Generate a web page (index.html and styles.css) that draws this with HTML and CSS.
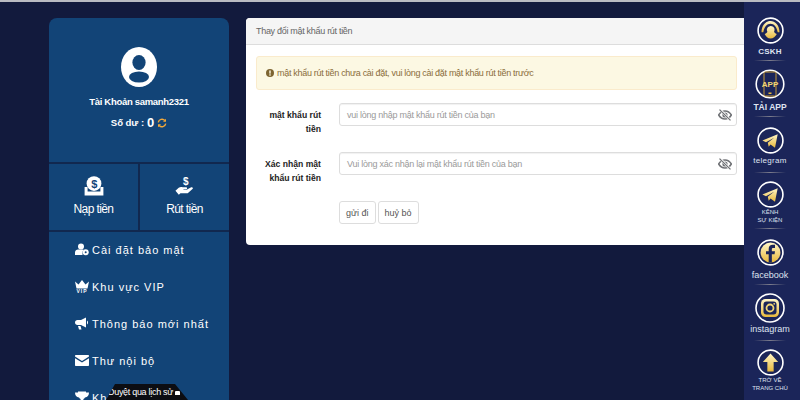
FILE: index.html
```html
<!DOCTYPE html>
<html lang="vi">
<head>
<meta charset="utf-8">
<title>Thay đổi mật khẩu rút tiền</title>
<link rel="stylesheet" href="styles.css">
</head>
<body>
<div class="page">
  <aside class="side">
    <section class="user">
      <svg class="avatar" viewBox="0 0 36 40" preserveAspectRatio="none"><ellipse cx="18" cy="20" rx="18" ry="20" fill="#fff"/><ellipse cx="18" cy="15.500" rx="6.600" ry="7.500" fill="#124477"/><ellipse cx="18" cy="30" rx="10" ry="5.500" fill="#124477"/></svg>
      <div class="uname">Tài Khoản samanh2321</div>
      <div class="balance">Số dư : <b>0</b>
        <svg class="refresh" viewBox="0 0 12 12"><path d="M1.500 5.200A4.600 4.600 0 0 1 9.400 3M10.500 6.800A4.600 4.600 0 0 1 2.600 9" fill="none" stroke="#f2a83a" stroke-width="1.700"/><path d="M10.800 .8v3.600H7.200zM1.200 11.200V7.600h3.600z" fill="#f2a83a"/></svg>
      </div>
    </section>
    <section class="actions">
      <a class="action">
        <svg viewBox="0 0 20 20"><circle cx="10" cy="7.600" r="7.400" fill="#fff"/><text x="10" y="11.600" text-anchor="middle" class="dollar">$</text><path d="M.6 11h3v4.600h12.800V11h3v8.400H.6z" fill="#fff"/></svg>
        <span>Nạp tiền</span>
      </a>
      <a class="action">
        <svg viewBox="0 0 22 20"><text x="11.500" y="9" text-anchor="middle" class="dollar white">$</text><path d="M.5 15.200l3.600-3.400c1.600-1 3-1 4.400-.4h3.800c1.400 0 1.400 2.200 0 2.200H9.200l.2.6h3.400l5-2.800c1.600-.6 2.600 1 1.400 2L14 18H6l-1.800 1.500z" fill="#fff"/></svg>
        <span>Rút tiền</span>
      </a>
    </section>
    <nav class="menu">
      <a class="item"><svg viewBox="0 0 14 12"><circle cx="6" cy="3" r="3" fill="#fff"/><path d="M0 11.500V9c0-2 1.500-3 3-3h5.500L7.500 8.500v3z" fill="#fff"/><circle cx="10.700" cy="8.800" r="3" fill="#fff"/><circle cx="10.700" cy="8.800" r="1" fill="#124477"/></svg><span>Cài đặt bảo mật</span></a>
      <a class="item"><svg viewBox="0 0 14 13"><path d="M0 1.500l3.500 3L7 0l3.500 4.500L14 1.500 12.500 8.500h-11z" fill="#fff"/><text x="7" y="13" text-anchor="middle" class="vip">VIP</text></svg><span>Khu vực VIP</span></a>
      <a class="item"><svg viewBox="0 0 14 12"><path d="M11 0v10L6 7.500H2.500C1 7.500 0 6.500 0 5s1-2.500 2.500-2.500H6zM12 3c1.400.6 1.400 3.400 0 4zM3 8.500h2.500l1 3.500H4z" fill="#fff"/></svg><span>Thông báo mới nhất</span></a>
      <a class="item"><svg viewBox="0 0 14 11"><path d="M1 0h12c.6 0 1 .4 1 1v.6L7 6 0 1.600V1c0-.6.400-1 1-1zM0 3.200l7 4.400 7-4.400V10c0 .6-.400 1-1 1H1c-.6 0-1-.400-1-1z" fill="#fff"/></svg><span>Thư nội bộ</span></a>
      <a class="item"><svg viewBox="0 0 14 12"><path d="M3 0h8v1h3c0 3-1.500 4.500-4 5-.4.800-1 1.200-1.600 1.400V9H10v2H4V9h1.600V7.400C5 7.200 4.400 6.800 4 6 1.500 5.500 0 4 0 1h3z" fill="#fff"/></svg><span>Khuyến mãi</span></a>
    </nav>
    <div class="tip">Duyệt qua lịch sử <i class="tip-lock"></i></div>
  </aside>

  <main class="panel">
    <header class="panel-head">Thay đổi mật khẩu rút tiền</header>
    <div class="panel-body">
      <div class="alert"><svg viewBox="0 0 10 10"><circle cx="5" cy="5" r="5" fill="#7d6431"/><rect x="4.100" y="1.800" width="1.800" height="4" fill="#fcf8e3"/><rect x="4.100" y="6.600" width="1.800" height="1.700" fill="#fcf8e3"/></svg>mật khẩu rút tiền chưa cài đặt, vui lòng cài đặt mật khẩu rút tiền trước</div>
      <div class="row">
        <label class="lbl">mật khẩu rút tiền</label>
        <div class="input"><span>vui lòng nhập mật khẩu rút tiền của bạn</span>
          <svg class="eye" viewBox="0 0 14 12"><path d="M.6 6C2.200 3.400 4.400 2 7 2s4.800 1.400 6.400 4C11.800 8.600 9.600 10 7 10S2.200 8.600.6 6z" fill="none" stroke="#6f7175" stroke-width="1.500"/><circle cx="7" cy="6" r="2.600" fill="#6f7175"/><path d="M2 .6l10.500 10.800" stroke="#fff" stroke-width="2.400"/><path d="M1.500 .6L12.500 11.400" stroke="#6f7175" stroke-width="1.300"/></svg>
        </div>
      </div>
      <div class="row">
        <label class="lbl">Xác nhận mật khẩu rút tiền</label>
        <div class="input"><span>Vui lòng xác nhận lại mật khẩu rút tiền của bạn</span>
          <svg class="eye" viewBox="0 0 14 12"><path d="M.6 6C2.200 3.400 4.400 2 7 2s4.800 1.400 6.400 4C11.800 8.600 9.600 10 7 10S2.200 8.600.6 6z" fill="none" stroke="#6f7175" stroke-width="1.500"/><circle cx="7" cy="6" r="2.600" fill="#6f7175"/><path d="M2 .6l10.500 10.800" stroke="#fff" stroke-width="2.400"/><path d="M1.500 .6L12.500 11.400" stroke="#6f7175" stroke-width="1.300"/></svg>
        </div>
      </div>
      <div class="btns">
        <button class="btn">gửi đi</button>
        <button class="btn">huỷ bỏ</button>
      </div>
    </div>
  </main>

  <aside class="rail">
    <svg width="0" height="0" class="defs"><defs>
      <linearGradient id="gold" x1="0" y1="0" x2="0" y2="1"><stop offset="0" stop-color="#fff6c8"/><stop offset="1" stop-color="#e8b93c"/></linearGradient>
    </defs></svg>
    <a class="rl cskh"><svg viewBox="0 0 30 30"><circle cx="15" cy="15" r="13.800" fill="#1b2559" stroke="#fff" stroke-width="1.800"/><path d="M5 17C5 9 10 4.500 15 4.500S25 9 25 17h-2C22 11 19 7.500 15 7.500S8 11 7 17z" fill="url(#gold)"/><path d="M8.500 19c2-1 3-2 3-3-1-1-1-5 3.500-6 5 0 5 5 4 6 0 1 1 2 3 3-1.500 3-4 5-7 5s-5-2-6.500-5z" fill="url(#gold)"/></svg><span>CSKH</span></a>
    <a class="rl big app"><svg viewBox="0 0 30 30"><circle cx="15" cy="15" r="13.800" fill="#1b2559" stroke="#fff" stroke-width="1.600"/><rect x="9" y="3" width="12" height="24" rx="1.500" fill="none" stroke="#c79a35" stroke-width="1"/><rect x="13.500" y="23.500" width="3" height="1.500" fill="#e8b93c"/><text x="15" y="18" text-anchor="middle" class="appword">APP</text></svg><span>TẢI APP</span></a>
    <a class="rl tg"><svg viewBox="0 0 30 30"><circle cx="15" cy="15" r="13.800" fill="#1b2559" stroke="#fff" stroke-width="1.800"/><path d="M6 15L23 8l-3 15-5-3.500-2 2.500-1-4.500 7-5.500-9 5z" fill="url(#gold)"/></svg><span>telegram</span></a>
    <a class="rl sm"><svg viewBox="0 0 30 30"><circle cx="15" cy="15" r="13.800" fill="#1b2559" stroke="#fff" stroke-width="1.800"/><path d="M6 15L23 8l-3 15-5-3.500-2 2.500-1-4.500 7-5.500-9 5z" fill="url(#gold)"/></svg><span>KÊNH<br>SỰ KIỆN</span></a>
    <a class="rl"><svg viewBox="0 0 30 30"><circle cx="15" cy="15" r="13.800" fill="#1b2559" stroke="#fff" stroke-width="1.800"/><circle cx="15" cy="15" r="11" fill="url(#gold)"/><path d="M13 26v-9h-3v-3.500h3V11c0-3 1.800-4.500 4.500-4.500H20V10h-1.800c-1.200 0-1.700.5-1.700 1.500v2H20l-.5 3.500h-3v9z" fill="#1b2559"/></svg><span>facebook</span></a>
    <a class="rl big"><svg viewBox="0 0 30 30"><circle cx="15" cy="15" r="14" fill="#1b2559" stroke="#fff" stroke-width="1.600"/><rect x="6" y="6" width="18" height="18" rx="4.500" fill="url(#gold)"/><rect x="8.500" y="8.500" width="13" height="13" rx="3" fill="#1b2559"/><circle cx="15" cy="15" r="3.500" fill="none" stroke="#f3d775" stroke-width="1.800"/><circle cx="19.200" cy="10.800" r=".9" fill="#f3d775"/></svg><span>instagram</span></a>
    <a class="rl sm last"><svg viewBox="0 0 30 30"><circle cx="15" cy="15" r="13.800" fill="#1b2559" stroke="#fff" stroke-width="1.800"/><path d="M15 5l8.500 9.500h-5V25h-7V14.500h-5z" fill="url(#gold)"/></svg><span>TRỞ VỀ<br>TRANG CHỦ</span></a>
  </aside>
</div>
</body>
</html>
```
FILE: styles.css
```css
* { box-sizing: border-box; }
html, body { margin: 0; height: 100%; overflow: hidden; }
body {
  background: #121a3d;
  font-family: "Liberation Sans", Arial, sans-serif;
  border-top: 2px solid #b9bbc2;
}
.page { display: flex; align-items: flex-start; height: 398px; padding-left: 49px; }
.side {
  position: relative;
  flex: 0 0 180px;
  margin-top: 16px;
  height: 400px;
  background: #124477;
  border-radius: 8px 8px 0 0;
  color: #fff;
}
.user {
  height: 146px;
  padding-top: 29px;
  display: flex;
  flex-direction: column;
  align-items: center;
  border-bottom: 2px solid #11284f;
}
.avatar { width: 36px; height: 40px; }
.uname { margin-top: 8px; font-size: 9.500px; letter-spacing: -.3px; font-weight: 700; line-height: 14px; }
.balance { margin-top: 5px; font-size: 9.600px; font-weight: 700; line-height: 18px; display: flex; align-items: center; gap: 3px; letter-spacing: -.05px; }
.balance b { font-size: 13px; }
.refresh { width: 10px; height: 10px; }
.actions { display: flex; height: 68px; border-bottom: 2px solid #11284f; }
.action {
  flex: 1;
  display: flex;
  flex-direction: column;
  align-items: center;
  padding-top: 12px;
  gap: 6px;
  font-size: 12px;
  letter-spacing: -.6px;
}
.action + .action { border-left: 2px solid #11284f; }
.action svg { width: 20px; height: 20px; }
.dollar { font: 700 11px "Liberation Sans", sans-serif; fill: #124477; }
.dollar.white { fill: #fff; }
.menu { display: flex; flex-direction: column; padding: 0 0 0 26px; margin-top: -1px; }
.item {
  display: flex;
  align-items: center;
  gap: 3px;
  height: 37px;
  font-size: 11px;
  letter-spacing: 1px;
  white-space: nowrap;
}
.item svg { width: 14px; height: 13px; flex: none; }
.vip { font: 700 5px "Liberation Sans", sans-serif; fill: #fff; }
.tip {
  position: absolute;
  left: 57px;
  top: 366px;
  width: 82px;
  height: 20px;
  background: #0c0d12;
  clip-path: polygon(9px 0, 69px 0, 82px 16px, 82px 20px, 0 20px, 0 16px);
  font-size: 9px;
  letter-spacing: -.3px;
  line-height: 12px;
  padding: 2px 0 0 2px;
  white-space: nowrap;
}
.tip-lock { display: inline-block; width: 5px; height: 4px; background: #fff; border-radius: 1px 1px 0 0; }

.panel {
  flex: 0 0 498px;
  margin: 16px 0 0 17px;
  height: 227px;
  background: #fff;
  border-radius: 4px 0 0 4px;
  color: #333;
}
.panel-head {
  height: 27px;
  background: #f5f5f5;
  border-bottom: 1px solid #ddd;
  border-radius: 4px 0 0 0;
  padding: 0 10px;
  font-size: 9px;
  letter-spacing: -.3px;
  line-height: 27px;
  color: #666;
}
.panel-body { padding: 11px 7px 0 10px; }
.alert {
  height: 34px;
  background: #fcf8e3;
  border: 1px solid #faebcc;
  border-radius: 3px;
  padding-left: 9px;
  display: flex;
  align-items: center;
  gap: 3px;
  font-size: 9px;
  letter-spacing: -.3px;
  color: #8a6d3b;
}
.alert svg { width: 8px; height: 8px; flex: none; }
.row { display: flex; align-items: flex-start; gap: 18px; margin-top: 13px; }
.row + .row { margin-top: 16px; }
.lbl {
  flex: 0 0 65px;
  text-align: right;
  font-size: 8.600px;
  font-weight: 700;
  line-height: 14px;
  color: #222;
  padding-top: 5px;
}
.input {
  flex: 1;
  height: 23px;
  background: #fff;
  border: 1px solid #ddd;
  border-radius: 3px;
  box-shadow: inset 0 1px 1px rgba(0,0,0,.06);
  padding: 0 4px 0 7px;
  display: flex;
  align-items: center;
  justify-content: space-between;
  font-size: 9px;
  letter-spacing: -.25px;
  color: #9a9a9a;
}
.eye { width: 14px; height: 12px; }
.btns { display: flex; gap: 2px; margin: 16px 0 0 83px; }
.btn {
  height: 23px;
  padding: 0 6px;
  background: #fff;
  border: 1px solid #ddd;
  border-radius: 3px;
  font: 9px "Liberation Sans", sans-serif;
  color: #555;
}

.rail {
  flex: 0 0 56px;
  height: 398px;
  background: #1b2559;
  display: flex;
  flex-direction: column;
  align-items: center;
  padding: 3px 4px 0 0;
  color: #dfe3f0;
}
.defs { position: absolute; }
.rl {
  width: 46px;
  height: 56px;
  padding-top: 10px;
  display: flex;
  flex-direction: column;
  align-items: center;
  font-size: 9px;
  line-height: 10px;
  text-align: center;
  white-space: nowrap;
}
.rl::after {
  content: "";
  margin-top: auto;
  width: 32px;
  height: 1px;
  background: linear-gradient(90deg, transparent, #7c7c8c, transparent);
}
.rl svg { width: 27px; height: 27px; flex: none; }
.rl span { margin-top: 4px; }
.cskh { padding-top: 12px; font-size: 8px; font-weight: 700; letter-spacing: .2px; }
.cskh span { margin-top: 3px; }
.tg { font-size: 8px; letter-spacing: .3px; }
.tg span { margin-top: 2px; }
.big { padding-top: 8px; }
.big svg { width: 30px; height: 30px; }
.big span { margin-top: 1px; }
.app { font-weight: 700; font-size: 8.500px; }
.app span { margin-top: 3px; }
.sm { font-size: 6px; line-height: 8px; padding-top: 8px; }
.sm span { margin-top: 0; }
.last::after { display: none; }
.appword { font: 700 8px "Liberation Sans", sans-serif; fill: #f3d775; }
```
